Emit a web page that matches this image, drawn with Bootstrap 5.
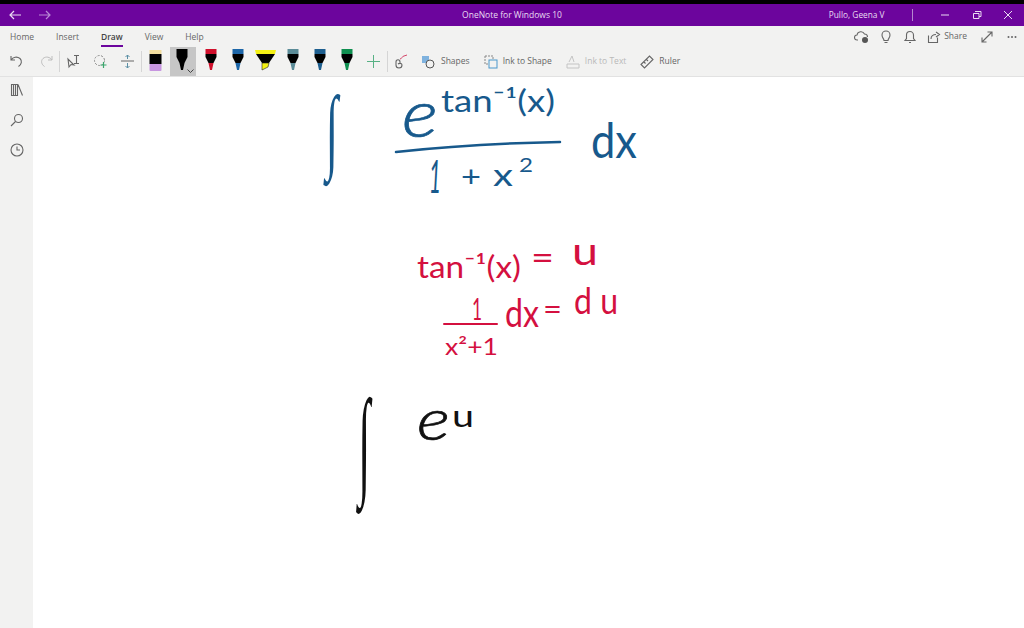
<!DOCTYPE html>
<html lang="en">
<head>
    <meta charset="UTF-8">
    <meta name="viewport" content="width=device-width, initial-scale=1.0">
    <title>OneNote for Windows 10</title>
    <link href="https://cdn.jsdelivr.net/npm/bootstrap@5.3.3/dist/css/bootstrap.min.css" rel="stylesheet">
    <style>
        html, body { height: 100%; overflow: hidden; }
        body { font-family: "Open Sans", "Noto Sans", sans-serif; background: #fff; }
        .app-shell { height: 628px; border-top: 4px solid #000; }
        .title-bar { height: 22px; background: #6c059d; color: #eadcf2; position: relative; }
        .title-name { position: absolute; left: 0; right: 0; top: 5px; text-align: center; font-size: 8.5px; }
        .tb-btn { width: 30px; display: flex; justify-content: center; }
        .win-btn { width: 31.5px; display: flex; justify-content: center; }
        .user-name { margin-right: 27px; font-size: 8.3px; }
        .user-sep { width: 1px; height: 12px; background: #b587cf; margin-right: 17px; }
        .ribbon { height: 51px; background: #f2f2f1; border-bottom: 1px solid #e2e2e2; flex: none; }
        .tab-row { height: 21px; position: relative; font-size: 8.5px; color: #666; padding-left: 10px; gap: 22px; }
        .tab-item { position: relative; line-height: 21px; }
        .tab-active { font-weight: 600; color: #444; }
        .tab-active::after { content: ""; position: absolute; left: 0; right: 0; bottom: 0; height: 2px; background: #6c059d; }
        .tool-row { height: 29px; font-size: 8.5px; color: #666; }
        .tool { height: 29px; display: flex; align-items: center; justify-content: center; flex: none; }
        .tool-sep { width: 1px; height: 21px; background: #d5d5d5; flex: none; }
        .tool-on { background: #c6c6c6; width: 26px; margin-left: 1px; margin-right: 1px; }
        .tool-label { margin-left: 5px; white-space: nowrap; }
        .tool-off { color: #b9b9b9; }
        .w-33 { width: 33px; }
        .w-28 { width: 28px; }
        .w-27 { width: 27px; }
        .w-26 { width: 26px; }
        .gap-left { margin-left: 14px; }
        .shape-left { margin-left: 7px; }
        .pen-ic { margin-bottom: 4px; }
        .pen-chevron { position: absolute; right: 2px; bottom: 3px; }
        .pen-main { margin-right: 2px; color: #000; }
        .c-red { color: #d0102c; }
        .c-blue { color: #1d66a8; }
        .c-teal { color: #5b8c98; }
        .c-navy { color: #1e5f8f; }
        .c-green { color: #0f8f50; }
        .side-rail { width: 33px; background: #f2f2f1; gap: 4px; flex: none; }
        .rail-btn { height: 26px; display: flex; align-items: center; justify-content: center; }
        .ink-page { display: block; }
        .ink-txt { font-family: "Lato", "Open Sans", sans-serif; font-weight: 400; }
        .int-glyph { font-family: "Liberation Serif", serif; }
        .big-e { font-weight: 300; stroke-width: .7; }
        .ink-blue { fill: #17598c; stroke: #17598c; stroke-width: 0; }
        .ink-red { fill: #d4103f; stroke: #d4103f; stroke-width: 0; }
        .ink-black { fill: #111; stroke: #111; stroke-width: 0; }
        .ink-line { fill: none; stroke-linecap: round; }
        .line-blue { stroke-width: 2.5; }
        .line-red { stroke-width: 2; }
        .right-icons { position: absolute; top: 0; right: 0; height: 21px; }
        .ic-cloud { margin-right: 9px; }
        .ic-bulb, .ic-bell { margin-right: 10px; }
        .ic-share { margin-right: 3px; }
        .share-txt { margin-right: 13px; }
        .ic-expand { margin-right: 13px; }
        .ic-dots { margin-right: 7px; }
        .ln { fill: none; stroke: #666; stroke-width: 1.1; }
    </style>
</head>
<body>

<svg width="0" height="0" class="position-absolute">
    <symbol id="pen" viewBox="0 0 16 24">
        <path d="M2.500 1h11v5h-11z" fill="currentColor"/>
        <path d="M2.500 6h11v3l-3 6h-5l-3-6z" fill="#000"/>
        <path d="M5.500 15h5l-1.500 7h-2z" fill="currentColor"/>
    </symbol>
</svg>

<div class="app-shell d-flex flex-column">
    <div class="title-bar d-flex align-items-center">
        <div class="title-name">OneNote for Windows 10</div>
        <div class="tb-btn">
            <svg width="14" height="10" viewBox="0 0 14 10"><path d="M13 5H2M6 1 2 5l4 4" fill="none" stroke="#eadcf2" stroke-width="1.200"/></svg>
        </div>
        <div class="tb-btn">
            <svg width="14" height="10" viewBox="0 0 14 10"><path d="M1 5h11M8 1l4 4-4 4" fill="none" stroke="#b98ad6" stroke-width="1.200"/></svg>
        </div>
        <div class="ms-auto d-flex align-items-center">
            <span class="user-name">Pullo, Geena V</span>
            <span class="user-sep"></span>
            <div class="win-btn"><svg width="10" height="10" viewBox="0 0 10 10"><path d="M1 5h8" stroke="#eadcf2"/></svg></div>
            <div class="win-btn"><svg width="10" height="10" viewBox="0 0 10 10"><path d="M3 1.500h6v5H7M1.500 3.500h5.500v5h-5.500z" fill="none" stroke="#eadcf2"/></svg></div>
            <div class="win-btn"><svg width="10" height="10" viewBox="0 0 10 10"><path d="M1 1l8 8M9 1 1 9" stroke="#eadcf2"/></svg></div>
        </div>
    </div>

    <div class="ribbon">
        <div class="tab-row d-flex">
            <div class="tab-item">Home</div>
            <div class="tab-item">Insert</div>
            <div class="tab-item tab-active">Draw</div>
            <div class="tab-item">View</div>
            <div class="tab-item">Help</div>
            <div class="right-icons d-flex align-items-center">
                <svg class="ic-cloud" width="16" height="14" viewBox="0 0 16 14"><path class="ln" d="M4 10H3a2.500 2.500 0 0 1 0-5 4 4 0 0 1 7.500-1 3 3 0 0 1 3 3"/><circle cx="11" cy="10" r="3" fill="#555"/></svg>
                <svg class="ic-bulb" width="14" height="14" viewBox="0 0 14 14"><path class="ln" d="M5 10.500C5 8.500 3 8 3 5a4 4 0 0 1 8 0c0 3-2 3.500-2 5.500zM5.500 12.500h3"/></svg>
                <svg class="ic-bell" width="14" height="14" viewBox="0 0 14 14"><path class="ln" d="M2 10.500h10l-1.500-2V5a3.500 3.500 0 0 0-7 0v3.500zM6 12.500h2"/></svg>
                <svg class="ic-share" width="14" height="14" viewBox="0 0 14 14"><path class="ln" d="M1.500 5.500v7h9v-5M4 9c0-3 2-4.500 5-4.500M9 2l3.500 2.500L9 7"/></svg>
                <span class="share-txt">Share</span>
                <svg class="ic-expand" width="14" height="14" viewBox="0 0 14 14"><path class="ln" d="M2 12 12 2M7.500 2H12v4.500M2 7.500V12h4.500"/></svg>
                <svg class="ic-dots" width="10" height="4" viewBox="0 0 10 4"><circle cx="1.500" cy="2" r="1" fill="#666"/><circle cx="5" cy="2" r="1" fill="#666"/><circle cx="8.500" cy="2" r="1" fill="#666"/></svg>
            </div>
        </div>
        <div class="tool-row d-flex align-items-center">
            <div class="tool w-33"><svg width="13" height="13" viewBox="0 0 13 13"><path class="ln" d="M1 1v4h4M1 5c2-3 6-4 9-1.500 2.500 2.500 1.500 6-1.500 8"/></svg></div>
            <div class="tool w-26"><svg width="13" height="13" viewBox="0 0 13 13"><path d="M12 1v4H8M12 5C10 2 6 1 3 3.500.5 6 1.500 9.500 4.500 11.500" fill="none" stroke="#bdbdbd"/></svg></div>
            <div class="tool-sep"></div>
            <div class="tool w-27"><svg width="16" height="15" viewBox="0 0 16 15"><path class="ln" d="M2 5l1 8 2-2.500 3 .5zM8 1.500h5M10.500 1.500v8M8 9.500h5"/></svg></div>
            <div class="tool w-27"><svg width="15" height="15" viewBox="0 0 15 15"><circle cx="6.500" cy="6.500" r="5" fill="none" stroke="#888" stroke-dasharray="2 1.500"/><path d="M10.500 8v6M7.500 11h6" stroke="#3aa76d" stroke-width="1.200"/></svg></div>
            <div class="tool w-27"><svg width="13" height="15" viewBox="0 0 13 15"><path d="M0 7h13" stroke="#666"/><path d="M6.500 1v4M4.500 3l2-2 2 2M6.500 9v5M4.500 12l2 2 2-2" fill="none" stroke="#5b8fa5"/></svg></div>
            <div class="tool-sep"></div>
            <div class="tool w-27"><svg class="pen-ic" width="13" height="22" viewBox="0 0 13 22"><path d="M.500 1h12v4H.500z" fill="#f1dc9e"/><path d="M.500 5h12v10H.500z" fill="#000"/><path d="M.500 15h12v6a1 1 0 0 1-1 1h-10a1 1 0 0 1-1-1z" fill="#c796e0"/></svg></div>
            <div class="tool tool-on position-relative"><svg class="pen-main pen-ic" width="16" height="24"><use href="#pen"/></svg><svg class="pen-chevron" width="7" height="4" viewBox="0 0 7 4"><path d="M.500.500l3 3 3-3" fill="none" stroke="#444"/></svg></div>
            <div class="tool w-27 c-red"><svg class="pen-ic" width="16" height="24"><use href="#pen"/></svg></div>
            <div class="tool w-27 c-blue"><svg class="pen-ic" width="16" height="24"><use href="#pen"/></svg></div>
            <div class="tool w-28"><svg class="pen-ic" width="21" height="22" viewBox="0 0 21 22"><path d="M0 1h21l-1 4H1z" fill="#f4f115"/><path d="M1 5h19l-6 9H7z" fill="#000"/><path d="M7 14h7l-1 4-6 3z" fill="#f4f115" stroke="#222" stroke-width=".6"/></svg></div>
            <div class="tool w-27 c-teal"><svg class="pen-ic" width="16" height="24"><use href="#pen"/></svg></div>
            <div class="tool w-27 c-navy"><svg class="pen-ic" width="16" height="24"><use href="#pen"/></svg></div>
            <div class="tool w-27 c-green"><svg class="pen-ic" width="16" height="24"><use href="#pen"/></svg></div>
            <div class="tool w-27"><svg width="13" height="13" viewBox="0 0 13 13"><path d="M6.500 0v13M0 6.500h13" stroke="#57b184"/></svg></div>
            <div class="tool-sep"></div>
            <div class="tool w-26"><svg width="14" height="15" viewBox="0 0 14 15"><path class="ln" d="M2 8c0-3 4-3 4 0v1M2 8v3a3 3 0 0 0 6 0c0-2-3-2-4-1"/><path d="M6 5c2 0 2-3 4-3l3-1" fill="none" stroke="#d4466a"/></svg></div>
            <div class="tool shape-left"><svg width="15" height="14" viewBox="0 0 15 14"><rect x="1" y="1" width="7" height="7" fill="#7fb2de"/><circle cx="9" cy="9" r="4" fill="#f2f2f1" stroke="#555"/></svg><span class="tool-label">Shapes</span></div>
            <div class="tool gap-left"><svg width="14" height="14" viewBox="0 0 14 14"><path d="M1 1h8v3M1 1v8h3" fill="none" stroke="#888" stroke-dasharray="2 1"/><rect x="5" y="5" width="8" height="8" fill="none" stroke="#4b97cc"/></svg><span class="tool-label">Ink to Shape</span></div>
            <div class="tool tool-off gap-left"><svg width="14" height="14" viewBox="0 0 14 14"><path d="M6 1 3 7M6 1l2 6M1 9h12v4H1z" fill="none" stroke="#c4c4c4"/></svg><span class="tool-label">Ink to Text</span></div>
            <div class="tool gap-left"><svg width="14" height="14" viewBox="0 0 14 14"><path class="ln" d="M1 9.500 9.500 1l3.500 3.500L4.500 13zM4 7l1.500 1.500M6.500 4.500 8 6"/></svg><span class="tool-label">Ruler</span></div>
        </div>
    </div>

    <div class="d-flex flex-grow-1">
        <div class="side-rail d-flex flex-column">
            <div class="rail-btn"><svg width="14" height="14" viewBox="0 0 14 14"><path class="ln" d="M1.500 1.500h2v11h-2zM3.500 1.500h2v11h-2zM5.500 1.500h2v11h-2zM8 1.500l4.500 11"/></svg></div>
            <div class="rail-btn"><svg width="14" height="14" viewBox="0 0 14 14"><circle class="ln" cx="8.500" cy="5.500" r="4"/><path class="ln" d="M5.500 8.500l-4.500 4.500"/></svg></div>
            <div class="rail-btn"><svg width="14" height="14" viewBox="0 0 14 14"><circle class="ln" cx="7" cy="7" r="6"/><path class="ln" d="M7 3.500V7h3"/></svg></div>
        </div>
        <svg class="ink-page flex-grow-1" width="991" height="551" viewBox="33 77 991 551">
            <g class="ink-txt ink-blue">
                <text class="int-glyph" font-size="112" transform="translate(325.800 161) scale(.4 .84)">∫</text>
                <text class="big-e" x="402" y="137" font-size="66" font-style="italic" textLength="36" lengthAdjust="spacingAndGlyphs">e</text>
                <text x="441" y="112" font-size="31" textLength="114" lengthAdjust="spacingAndGlyphs">tan⁻¹(x)</text>
                <text x="429" y="193" font-size="46" font-style="italic" textLength="12" lengthAdjust="spacingAndGlyphs">1</text>
                <text x="461" y="187" font-size="28" textLength="20" lengthAdjust="spacingAndGlyphs">+</text>
                <text x="493" y="186" font-size="30" textLength="20" lengthAdjust="spacingAndGlyphs">x</text>
                <text x="519" y="172" font-size="20" textLength="14" lengthAdjust="spacingAndGlyphs">2</text>
                <text x="591" y="158" font-size="48" textLength="46" lengthAdjust="spacingAndGlyphs">dx</text>
                <path class="ink-line line-blue" d="M396 152C450 146 505 143 560 142"/>
            </g>
            <g class="ink-txt ink-red">
                <text x="417" y="278" font-size="31" textLength="104" lengthAdjust="spacingAndGlyphs">tan⁻¹(x)</text>
                <text x="531" y="269" font-size="32" textLength="23" lengthAdjust="spacingAndGlyphs">=</text>
                <text x="572" y="265" font-size="38" textLength="26" lengthAdjust="spacingAndGlyphs">u</text>
                <text x="472" y="320" font-size="30" textLength="10" lengthAdjust="spacingAndGlyphs">1</text>
                <path class="ink-line line-red" d="M444 324H497"/>
                <text x="445" y="355" font-size="24" textLength="53" lengthAdjust="spacingAndGlyphs">x²+1</text>
                <text x="505" y="327" font-size="38" textLength="34" lengthAdjust="spacingAndGlyphs">dx</text>
                <text x="543" y="320" font-size="30" textLength="19" lengthAdjust="spacingAndGlyphs">=</text>
                <text x="574" y="314" font-size="36" textLength="44" lengthAdjust="spacingAndGlyphs">d u</text>
            </g>
            <g class="ink-txt ink-black">
                <text class="int-glyph" font-size="140" transform="translate(358.200 482.400) scale(.31 .854)">∫</text>
                <text class="big-e" x="417" y="440" font-size="58" font-style="italic" textLength="33" lengthAdjust="spacingAndGlyphs">e</text>
                <text x="452" y="427" font-size="30" textLength="22" lengthAdjust="spacingAndGlyphs">u</text>
            </g>
        </svg>
    </div>
</div>

<script src="https://cdn.jsdelivr.net/npm/bootstrap@5.3.3/dist/js/bootstrap.bundle.min.js"></script>
</body>
</html>
